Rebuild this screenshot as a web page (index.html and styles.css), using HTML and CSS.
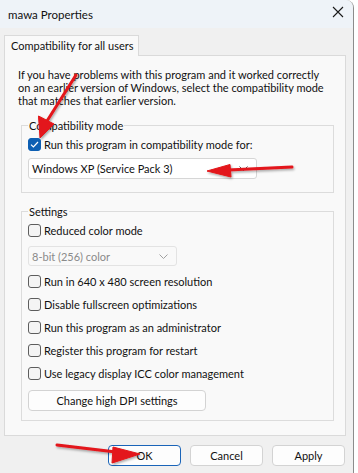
FILE: index.html
```html
<!DOCTYPE html>
<html lang="en">
<head>
  <meta charset="UTF-8" />
  <title>mawa Properties</title>
  <link rel="stylesheet" href="styles.css">
</head>
<body>
  <div class="window">
    <div class="titlebar">
      <span class="title">mawa Properties</span>
      <svg class="close" width="12" height="12" viewBox="0 0 12 12"><path d="M1 1L11 11M11 1L1 11" stroke="#1a1a1a" stroke-width="1.1"/></svg>
    </div>

    <div class="content">
      <div class="tabs">
        <div class="tab">Compatibility for all users</div>
      </div>
      <div class="panel">
        <p class="intro">If you have problems with this program and it worked correctly<br>on an earlier version of Windows, select the compatibility mode<br>that matches that earlier version.</p>

        <fieldset class="group group-compat">
          <legend>Compatibility mode</legend>
          <label class="check"><span class="box checked"><svg width="9" height="7" viewBox="0 0 9 7"><path d="M1 3.6L3.4 6L8 1" fill="none" stroke="#fff" stroke-width="1.2"/></svg></span>Run this program in compatibility mode for:</label>
          <div class="select select-wide">
            <span>Windows XP (Service Pack 3)</span>
            <svg width="9" height="5" viewBox="0 0 9 5"><path d="M0.5 0.5L4.5 4.5L8.5 0.5" fill="none" stroke="#555" stroke-width="1"/></svg>
          </div>
        </fieldset>

        <fieldset class="group group-settings">
          <legend>Settings</legend>
          <label class="check"><span class="box"></span>Reduced color mode</label>
          <div class="select select-small disabled">
            <span>8-bit (256) color</span>
            <svg width="9" height="5" viewBox="0 0 9 5"><path d="M0.5 0.5L4.5 4.5L8.5 0.5" fill="none" stroke="#a0a0a0" stroke-width="1"/></svg>
          </div>
          <label class="check"><span class="box"></span>Run in 640 x 480 screen resolution</label>
          <label class="check"><span class="box"></span>Disable fullscreen optimizations</label>
          <label class="check"><span class="box"></span>Run this program as an administrator</label>
          <label class="check"><span class="box"></span>Register this program for restart</label>
          <label class="check"><span class="box"></span>Use legacy display ICC color management</label>
          <button class="btn btn-dpi">Change high DPI settings</button>
        </fieldset>
      </div>

      <div class="actions">
        <button class="btn btn-action default">OK</button>
        <button class="btn btn-action">Cancel</button>
        <button class="btn btn-action">Apply</button>
      </div>
    </div>
  </div>

  <!-- red annotation arrows drawn over the dialog -->
  <svg class="arrows" width="358" height="473" viewBox="0 0 358 473">
    <defs>
      <filter id="soft" x="-20%" y="-20%" width="140%" height="140%">
        <feDropShadow dx="1" dy="1.5" stdDeviation="1.2" flood-color="#000" flood-opacity="0.35"/>
      </filter>
    </defs>
    <g fill="#e3141a" stroke="#e3141a" filter="url(#soft)">
      <path d="M76 75L47 121" stroke-width="3" stroke-linecap="round" fill="none"/>
      <path d="M40 138L38.5 116L54 124Z" stroke-width="1" stroke-linejoin="round"/>
      <path d="M292 167L228 170" stroke-width="3" stroke-linecap="round" fill="none"/>
      <path d="M207 171L230 164.5L231 177Z" stroke-width="1" stroke-linejoin="round"/>
      <path d="M57 445L116 452" stroke-width="3" stroke-linecap="round" fill="none"/>
      <path d="M140 454L113 447L112 463Z" stroke-width="1" stroke-linejoin="round"/>
    </g>
  </svg>
</body>
</html>
```

FILE: styles.css
```css
body {
  margin: 0;
  width: 358px;
  height: 473px;
  background: #fff;
  font-family: 'Lato', 'Liberation Sans', sans-serif;
  font-size: 11px;
  color: #111;
  position: relative;
  overflow: hidden;
  white-space: nowrap;
}
.window {
  width: 353px;
  height: 473px;
  background: #f0f0f0;
  border-right: 1px solid #8c8c8c;
  border-top-right-radius: 8px;
  overflow: hidden;
}
.titlebar {
  height: 28px;
  background: #eef3f8;
  display: flex;
  align-items: center;
  justify-content: space-between;
  padding: 0 9px 0 8px;
  box-sizing: border-box;
}
.title {
  font-size: 11.5px;
}
.close {
  margin-bottom: 4px;
}
.content {
  padding: 7px 7px 0 4px;
}
.tabs {
  display: flex;
}
.tab {
  height: 20px;
  line-height: 20px;
  padding: 0 5px 0 6px;
  background: #f9f9f9;
  border: 1px solid #dadada;
  border-bottom: none;
  margin-bottom: -1px;
  position: relative;
  z-index: 1;
}
.panel {
  width: 342px;
  height: 381px;
  box-sizing: border-box;
  background: #f9f9f9;
  border: 1px solid #dadada;
  padding: 12px 11px 0 13px;
}
.intro {
  margin: 0;
  line-height: 13px;
}
.group {
  border: 1px solid #dcdcdc;
  margin: 0 0 0 3px;
  padding: 0 6px;
}
.group legend {
  padding: 0 1px;
  line-height: 15px;
}
.group-compat {
  margin-top: 11px;
  padding-bottom: 13px;
}
.group-settings {
  margin-top: 11px;
  padding-bottom: 9px;
}
.check {
  display: flex;
  align-items: center;
  height: 23px;
}
.box {
  width: 11px;
  height: 11px;
  border: 1px solid #5d5d5d;
  border-radius: 3px;
  background: #f4f4f4;
  margin-right: 3px;
  display: flex;
  align-items: center;
  justify-content: center;
  flex-shrink: 0;
}
.box.checked {
  background: #0d5fb3;
  border-color: #0d5fb3;
}
.select {
  box-sizing: border-box;
  border: 1px solid #d6d6d6;
  border-radius: 3px;
  background: #fff;
  display: flex;
  align-items: center;
  justify-content: space-between;
  padding: 0 8px 0 3px;
}
.select-wide {
  width: 229px;
  height: 21px;
  margin-top: 2px;
}
.select-small {
  width: 149px;
  height: 20px;
  margin: 4px 0;
}
.select.disabled {
  background: #f9f9f9;
  border-color: #e3e3e3;
  color: #8a8a8a;
}
.btn {
  font-family: inherit;
  font-size: 11px;
  color: #111;
  background: #fdfdfd;
  border: 1px solid #d3d3d3;
  border-radius: 4px;
  padding: 0;
  height: 21px;
}
.btn-dpi {
  width: 178px;
  margin-top: 5px;
  display: block;
}
.actions {
  display: flex;
  justify-content: flex-end;
  gap: 9px;
  padding: 9px 1px 0 0;
}
.btn-action {
  width: 73px;
}
.btn-action.default {
  border-color: #1a64b8;
}
.arrows {
  position: absolute;
  left: 0;
  top: 0;
  pointer-events: none;
}
```
